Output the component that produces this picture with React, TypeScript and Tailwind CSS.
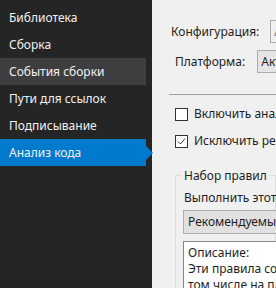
const font = "font-['Segoe_UI','Noto_Sans','Open_Sans',sans-serif]";

const items = [
  "Библиотека",
  "Сборка",
  "События сборки",
  "Пути для ссылок",
  "Подписывание",
  "Анализ кода",
];

export default function App() {
  const hovered = 2;
  const selected = 5;

  return (
    <div className={`flex h-[288px] w-[276px] overflow-hidden text-[12px] ${font}`}>
      {/* Side nav */}
      <div className="w-[152px] shrink-0 bg-[#252526] pt-[4px] pr-[6px]">
        {items.map((item, i) => (
          <div
            key={item}
            className={`relative flex h-[27px] items-center pl-[9px] text-[#f1f1f1] ${
              i === selected ? "bg-[#007acc]" : i === hovered ? "bg-[#3e3e40]" : ""
            }`}
          >
            {item}
            {i === selected && (
              <div className="absolute top-1/2 right-[-7px] h-0 w-0 -translate-y-1/2 border-y-[7px] border-l-[7px] border-y-transparent border-l-[#007acc]" />
            )}
          </div>
        ))}
      </div>

      {/* Property page */}
      <div className="min-w-0 flex-1 overflow-hidden whitespace-nowrap bg-[#f0f0f0] text-[#1e1e1e]">
        <div className="flex items-center pt-[20px] pl-[19px]">
          <span className="shrink-0">Конфигурация:</span>
          <div className="ml-[11px] flex h-[23px] w-[160px] shrink-0 items-center border border-[#adadad] bg-[#f0f0f0] pl-[3px] text-[#6d6d6d]">
            Активная (Debug)
          </div>
        </div>
        <div className="mt-[7px] flex items-center pl-[23px]">
          <span className="shrink-0">Платформа:</span>
          <div className="ml-[12px] flex h-[23px] w-[160px] shrink-0 items-center border border-[#adadad] bg-[#e5e5e5] pl-[3px]">
            Активная (Any CPU)
          </div>
        </div>

        <div className="mt-[21px] ml-[17px] h-px bg-[#a0a0a0]" />

        <div className="mt-[10px] flex flex-col gap-[9px] pl-[23px]">
          <label className="flex h-[18px] items-center gap-[6px]">
            <span className="h-[13px] w-[13px] shrink-0 border border-[#333333] bg-white" />
            <span className="shrink-0">Включить анализ кода при сборке</span>
          </label>
          <label className="flex h-[18px] items-center gap-[6px]">
            <span className="flex h-[13px] w-[13px] shrink-0 items-center justify-center border border-[#333333] bg-white">
              <svg width="9" height="9" viewBox="0 0 9 9" fill="none">
                <path d="M1 4.5 L3.5 7 L8 1.5" stroke="#333" strokeWidth="1" />
              </svg>
            </span>
            <span className="shrink-0">Исключить результаты из созданного кода</span>
          </label>
        </div>

        {/* Rule set group */}
        <div className="relative mt-[25px] ml-[23px] h-[200px] border border-[#dcdcdc] pt-[13px] pl-[7px]">
          <span className="absolute top-[-9px] left-[6px] bg-[#f0f0f0] px-[2px]">Набор правил</span>
          <div className="pl-[1px]">Выполнить этот набор правил:</div>
          <div className="mt-[3px] flex h-[24px] w-[200px] items-center border border-[#adadad] bg-[#e1e1e1] pl-[4px]">
            Рекомендуемые правила Майкрософт
          </div>
          <div className="mt-[7px] h-[80px] w-[200px] border border-[#828790] bg-white pt-[3px] pl-[4px] leading-[16px]">
            <div>Описание:</div>
            <div>Эти правила совместно находят ошибки, в</div>
            <div>том числе на платформе</div>
          </div>
        </div>
      </div>
    </div>
  );
}
